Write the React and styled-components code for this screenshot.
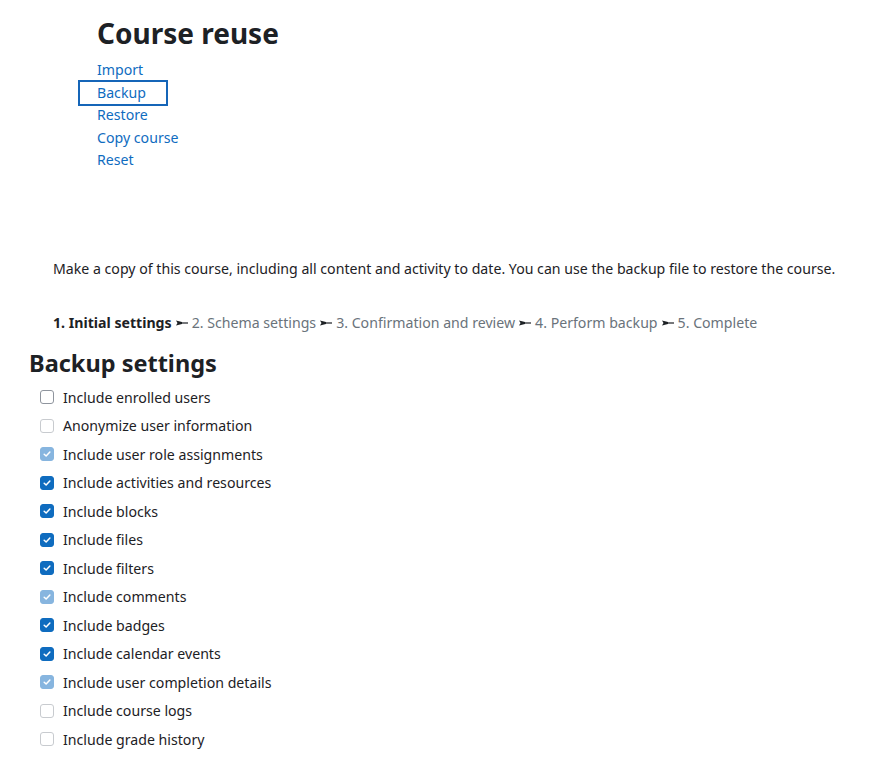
import React from "react";
import styled, { createGlobalStyle, css } from "styled-components";

const GlobalStyle = createGlobalStyle`
  body {
    margin: 0;
    background: #fff;
    color: #1d2125;
    font-family: "Noto Sans", "Open Sans", sans-serif;
    font-size: 14.15px;
  }
`;

const reuseLinks = ["Import", "Backup", "Restore", "Copy course", "Reset"];

const settings = [
  { label: "Include enrolled users", checked: false, disabled: false },
  { label: "Anonymize user information", checked: false, disabled: true },
  { label: "Include user role assignments", checked: true, disabled: true },
  { label: "Include activities and resources", checked: true, disabled: false },
  { label: "Include blocks", checked: true, disabled: false },
  { label: "Include files", checked: true, disabled: false },
  { label: "Include filters", checked: true, disabled: false },
  { label: "Include comments", checked: true, disabled: true },
  { label: "Include badges", checked: true, disabled: false },
  { label: "Include calendar events", checked: true, disabled: false },
  { label: "Include user completion details", checked: true, disabled: true },
  { label: "Include course logs", checked: false, disabled: true },
  { label: "Include grade history", checked: false, disabled: true },
];

const stages = [
  "1. Initial settings",
  "2. Schema settings",
  "3. Confirmation and review",
  "4. Perform backup",
  "5. Complete",
];

const Separator = () => (
  <SepIcon viewBox="0 0 12 8" aria-hidden="true">
    <path d="M0 1.5 L6 3 L6 5 L0 6.5 L1.5 4 Z" fill="#1d2125" />
    <rect x="5" y="3.4" width="7" height="1.2" fill="#1d2125" />
  </SepIcon>
);

const CheckMark = () => (
  <svg viewBox="0 0 16 16" width="10" height="10" aria-hidden="true">
    <path
      d="M3.5 8.3 L6.6 11.2 L12.6 4.8"
      fill="none"
      stroke="#fff"
      strokeWidth="2.4"
      strokeLinecap="round"
      strokeLinejoin="round"
    />
  </svg>
);

const App = () => {
  return (
    <Page>
      <GlobalStyle />
      <ReuseNav>
        <PageTitle>Course reuse</PageTitle>
        <LinkList>
          {reuseLinks.map((name) => (
            <li key={name}>
              <NavLink href="#" $focused={name === "Backup"}>
                {name}
              </NavLink>
            </li>
          ))}
        </LinkList>
      </ReuseNav>

      <Intro>
        Make a copy of this course, including all content and activity to
        date. You can use the backup file to restore the course.
      </Intro>

      <Stages>
        {stages.map((s, i) => (
          <React.Fragment key={s}>
            {i > 0 && <Separator />}
            <Stage $current={i === 0}>{s}</Stage>
          </React.Fragment>
        ))}
      </Stages>

      <SectionTitle>Backup settings</SectionTitle>
      <SettingsList>
        {settings.map((item) => (
          <SettingRow key={item.label}>
            <Box $checked={item.checked} $disabled={item.disabled}>
              {item.checked && <CheckMark />}
            </Box>
            <span>{item.label}</span>
          </SettingRow>
        ))}
      </SettingsList>
    </Page>
  );
};

export default App;

const Page = styled.div`
  width: 889px;
  padding: 17px 0 20px;
  box-sizing: border-box;
`;

const ReuseNav = styled.div`
  padding-left: 97px;
  padding-bottom: 86px;
`;

const PageTitle = styled.h2`
  margin: 0 0 8.5px;
  font-size: 28px;
  font-weight: 700;
  line-height: 1.2;
  color: #1d2125;
`;

const LinkList = styled.ul`
  list-style: none;
  margin: 0;
  padding: 0;
  li {
    line-height: 22.5px;
  }
`;

const NavLink = styled.a`
  position: relative;
  color: #0f6cbf;
  text-decoration: none;

  ${(p) =>
    p.$focused &&
    css`
      &::after {
        content: "";
        position: absolute;
        left: -19px;
        right: -22px;
        top: -3px;
        bottom: -4px;
        border: 2px solid #1565b8;
      }
    `}
`;

const Intro = styled.p`
  margin: 0 0 32px 53px;
  line-height: 22.5px;
`;

const Stages = styled.div`
  display: flex;
  align-items: center;
  gap: 4px;
  margin-left: 53px;
  line-height: 22.5px;
`;

const Stage = styled.span`
  color: ${(p) => (p.$current ? "#1d2125" : "#6a737b")};
  font-weight: ${(p) => (p.$current ? 700 : 400)};
`;

const SepIcon = styled.svg`
  width: 12px;
  height: 8px;
  flex: none;
`;

const SectionTitle = styled.h3`
  margin: 14px 0 6px 29px;
  font-size: 23.5px;
  font-weight: 700;
  line-height: 1.2;
  color: #1d2125;
`;

const SettingsList = styled.div`
  display: flex;
  flex-direction: column;
  margin-left: 40px;
`;

const SettingRow = styled.label`
  display: flex;
  align-items: center;
  gap: 9px;
  height: 28.5px;
  color: #1d2125;
`;

const Box = styled.span`
  width: 14px;
  height: 14px;
  box-sizing: border-box;
  border-radius: 3px;
  display: flex;
  align-items: center;
  justify-content: center;
  flex: none;
  ${(p) =>
    p.$checked
      ? css`
          background: ${p.$disabled ? "#87b5df" : "#0f6cbf"};
          border: 1px solid ${p.$disabled ? "#87b5df" : "#0f6cbf"};
        `
      : css`
          background: #fff;
          border: 1px solid ${p.$disabled ? "#c8cbcf" : "#8f959e"};
        `}
`;
